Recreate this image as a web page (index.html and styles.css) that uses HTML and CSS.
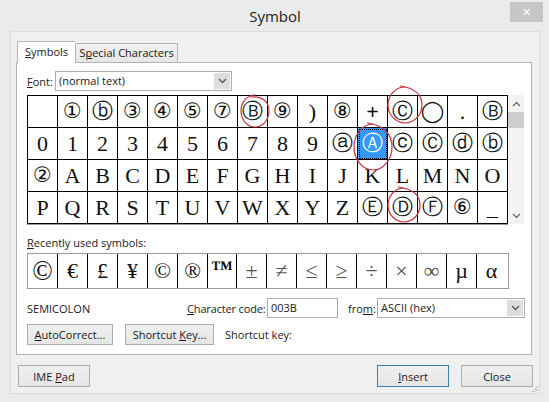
FILE: index.html
```html
<!DOCTYPE html>
<html lang="en">

<head>
    <meta charset="UTF-8">
    <title>Symbol</title>
    <link rel="stylesheet" href="styles.css">
</head>

<body>
    <div class="window">
        <div class="titlebar">
            <div class="title">Symbol</div>
            <div class="close">&#x2715;</div>
        </div>

        <div class="client">
            <div class="tabs">
                <div class="tab active"><u>S</u>ymbols</div>
                <div class="tab">S<u>p</u>ecial Characters</div>
            </div>

            <div class="panel">
                <div class="font-row">
                    <span class="font-label"><u>F</u>ont:</span>
                    <div class="select font-select">
                        <span class="value">(normal text)</span>
                        <span class="arrow"><svg width="9" height="6" viewBox="0 0 9 6"><polyline points="1,1 4.5,4.5 8,1" fill="none" stroke="#555" stroke-width="1.3"/></svg></span>
                    </div>
                </div>

                <div class="map-wrap">
                    <div class="charmap">
                        <div class="cell"></div>
                        <div class="cell c">&#x2460;</div>
                        <div class="cell c">&#x24D1;</div>
                        <div class="cell c">&#x2462;</div>
                        <div class="cell c">&#x2463;</div>
                        <div class="cell c">&#x2464;</div>
                        <div class="cell c">&#x2466;</div>
                        <div class="cell c">&#x24B7;</div>
                        <div class="cell c">&#x2468;</div>
                        <div class="cell">)</div>
                        <div class="cell c">&#x2467;</div>
                        <div class="cell plus">+</div>
                        <div class="cell c">&#x24B8;</div>
                        <div class="cell c">&#x25EF;</div>
                        <div class="cell">.</div>
                        <div class="cell c">&#x24B7;</div>

                        <div class="cell">0</div>
                        <div class="cell">1</div>
                        <div class="cell">2</div>
                        <div class="cell">3</div>
                        <div class="cell">4</div>
                        <div class="cell">5</div>
                        <div class="cell">6</div>
                        <div class="cell">7</div>
                        <div class="cell">8</div>
                        <div class="cell">9</div>
                        <div class="cell c">&#x24D0;</div>
                        <div class="cell c selected">&#x24B6;</div>
                        <div class="cell c">&#x24D2;</div>
                        <div class="cell c">&#x24B8;</div>
                        <div class="cell c">&#x24D3;</div>
                        <div class="cell c">&#x24D1;</div>

                        <div class="cell c">&#x2461;</div>
                        <div class="cell">A</div>
                        <div class="cell">B</div>
                        <div class="cell">C</div>
                        <div class="cell">D</div>
                        <div class="cell">E</div>
                        <div class="cell">F</div>
                        <div class="cell">G</div>
                        <div class="cell">H</div>
                        <div class="cell">I</div>
                        <div class="cell">J</div>
                        <div class="cell">K</div>
                        <div class="cell">L</div>
                        <div class="cell">M</div>
                        <div class="cell">N</div>
                        <div class="cell">O</div>

                        <div class="cell">P</div>
                        <div class="cell">Q</div>
                        <div class="cell">R</div>
                        <div class="cell">S</div>
                        <div class="cell">T</div>
                        <div class="cell">U</div>
                        <div class="cell">V</div>
                        <div class="cell">W</div>
                        <div class="cell">X</div>
                        <div class="cell">Y</div>
                        <div class="cell">Z</div>
                        <div class="cell c">&#x24BA;</div>
                        <div class="cell c">&#x24B9;</div>
                        <div class="cell c">&#x24BB;</div>
                        <div class="cell c">&#x2465;</div>
                        <div class="cell">_</div>

                        <!-- hand drawn marks on top of the grid -->
                        <svg class="marks" width="481" height="129" viewBox="0 0 481 129">
                            <path d="M227,-1 C219.3,-1 213,6.2 213,15 C213,23.8 219.3,31 227,31 C234.7,31 241,23.8 241,15 C241,6.2 235,0 222,1"/>
                            <path d="M377,-9 C367.6,-9 360,-0.9 360,9 C360,18.9 367.6,27 377,27 C386.4,27 394,18.9 394,9 C394,-0.9 387,-8 372,-10"/>
                            <path d="M345,28 C334.5,28 326,38.4 326,51 C326,63.6 334.5,74 345,74 C355.5,74 364,63.6 364,51 C364,38.4 356,29 339,27"/>
                            <path d="M376,92 C367.2,92 360,99.6 360,109 C360,118.4 367.2,126 376,126 C384.8,126 392,118.4 392,109 C392,99.6 385,93 370,91"/>
                        </svg>
                    </div>
                    <div class="vscroll">
                        <span class="sarrow"><svg width="9" height="6" viewBox="0 0 9 6"><polyline points="1,5 4.5,1.5 8,5" fill="none" stroke="#606060" stroke-width="1.2"/></svg></span>
                        <span class="thumb"></span>
                        <span class="track"></span>
                        <span class="sarrow"><svg width="9" height="6" viewBox="0 0 9 6"><polyline points="1,1 4.5,4.5 8,1" fill="none" stroke="#606060" stroke-width="1.2"/></svg></span>
                    </div>
                </div>

                <div class="recent-label"><u>R</u>ecently used symbols:</div>
                <div class="recent">
                    <div class="rcell big">&copy;</div>
                    <div class="rcell">&euro;</div>
                    <div class="rcell">&pound;</div>
                    <div class="rcell">&yen;</div>
                    <div class="rcell">&copy;</div>
                    <div class="rcell">&reg;</div>
                    <div class="rcell tm">&trade;</div>
                    <div class="rcell thin">&plusmn;</div>
                    <div class="rcell thin">&ne;</div>
                    <div class="rcell thin">&le;</div>
                    <div class="rcell thin">&ge;</div>
                    <div class="rcell thin">&divide;</div>
                    <div class="rcell thin">&times;</div>
                    <div class="rcell thin">&infin;</div>
                    <div class="rcell">&micro;</div>
                    <div class="rcell">&alpha;</div>
                </div>

                <div class="info-row">
                    <span class="char-name">SEMICOLON</span>
                    <span class="code-label"><u>C</u>haracter code:</span>
                    <div class="textbox">003B</div>
                    <span class="from-label">fro<u>m</u>:</span>
                    <div class="select from-select">
                        <span class="value">ASCII (hex)</span>
                        <span class="arrow"><svg width="9" height="6" viewBox="0 0 9 6"><polyline points="1,1 4.5,4.5 8,1" fill="none" stroke="#555" stroke-width="1.3"/></svg></span>
                    </div>
                </div>

                <div class="button-row">
                    <button class="btn autocorrect"><u>A</u>utoCorrect...</button>
                    <button class="btn shortcut">Shortcut <u>K</u>ey...</button>
                    <span class="shortcut-label">Shortcut key:</span>
                </div>
            </div>

            <div class="footer">
                <button class="btn dlg">IME <u>P</u>ad</button>
                <span class="spacer"></span>
                <button class="btn dlg default"><u>I</u>nsert</button>
                <button class="btn dlg">Close</button>
            </div>

            <svg class="grip" width="7" height="7" viewBox="0 0 7 7">
                <line x1="1" y1="7" x2="7" y2="1" stroke="#b0b0b0"/>
                <line x1="4" y1="7" x2="7" y2="4" stroke="#b0b0b0"/>
            </svg>
        </div>
    </div>
</body>

</html>
```

FILE: styles.css
```css
body {
    margin: 0;
    font-family: "Open Sans", "Noto Sans", sans-serif;
    font-size: 11px;
    color: #1a1a1a;
    background: #ebebeb;
}

u {
    text-decoration: underline;
    text-underline-offset: 1px;
}

.window {
    width: 549px;
    height: 402px;
    box-sizing: border-box;
    padding: 0 9px 8px 10px;
    display: flex;
    flex-direction: column;
}

.titlebar {
    height: 31px;
    flex-shrink: 0;
    display: grid;
    grid-template-columns: 1fr auto 1fr;
    align-items: start;
}

.title {
    grid-column: 2;
    font-size: 15px;
    line-height: 20px;
    padding-top: 6px;
    color: #222;
}

.close {
    grid-column: 3;
    justify-self: end;
    width: 33px;
    height: 20px;
    margin: 2px -3px 0 0;
    background: #c6c6c6;
    color: #fff;
    font-size: 11px;
    line-height: 20px;
    text-align: center;
}

.client {
    position: relative;
    flex: 1;
    background: #f0f0f0;
    border: 1px solid #dcdcdc;
    padding: 9px 7px 0 5px;
}

.tabs {
    display: flex;
    align-items: flex-end;
    height: 21px;
    margin-left: 1px;
}

.tab {
    box-sizing: border-box;
    height: 19px;
    width: 103px;
    border: 1px solid #b4b4b4;
    border-bottom: none;
    background: linear-gradient(#f2f2f2, #e6e6e6);
    text-align: center;
    line-height: 17px;
    white-space: nowrap;
}

.tab.active {
    width: 58px;
    height: 22px;
    margin-bottom: -1px;
    background: #fff;
    border-right: none;
    position: relative;
    z-index: 1;
    line-height: 20px;
}

.panel {
    box-sizing: border-box;
    height: 293px;
    background: #fff;
    border: 1px solid #b4b4b4;
    padding: 8px 0 0 10px;
}

.font-row {
    display: flex;
    align-items: center;
    height: 20px;
}

.font-label {
    width: 28px;
}

.select {
    box-sizing: border-box;
    display: flex;
    height: 20px;
    border: 1px solid #acacac;
    background: #fff;
    flex-shrink: 0;
}

.select .value {
    flex: 1;
    padding-left: 3px;
    line-height: 17px;
}

.select .arrow {
    width: 16px;
    margin: 1px;
    background: #dedede;
    display: flex;
    align-items: center;
    justify-content: center;
}

.font-select {
    width: 177px;
}

.map-wrap {
    display: flex;
    align-items: flex-start;
    margin-top: 4px;
}

.charmap {
    position: relative;
    display: grid;
    grid-template-columns: repeat(16, 30px);
    grid-auto-rows: 32px;
    border-left: 1px solid #000;
    border-top: 1px solid #000;
    box-shadow: 0 1px 0 #9a9a9a;
    font-family: "Liberation Serif", "DejaVu Serif", serif;
    font-size: 22px;
    color: #111;
}

.cell {
    border-right: 1px solid #000;
    border-bottom: 1px solid #000;
    display: flex;
    align-items: center;
    justify-content: center;
    line-height: 1;
}

.cell.c {
    font-family: "DejaVu Serif", "DejaVu Sans", serif;
    font-size: 21px;
}

.cell.plus {
    font-weight: bold;
}

.cell.selected {
    background: #3399ff;
    color: #fff;
    outline: 1px dotted #000;
    outline-offset: -2px;
}

.marks {
    position: absolute;
    left: 0;
    top: 0;
    overflow: visible;
    pointer-events: none;
}

.marks path {
    fill: none;
    stroke: #c8343e;
    stroke-width: 1.2;
}

.vscroll {
    width: 16px;
    height: 129px;
    background: #f3f3f3;
    display: flex;
    flex-direction: column;
}

.sarrow {
    height: 17px;
    display: flex;
    align-items: center;
    justify-content: center;
}

.thumb {
    height: 16px;
    background: #cdcdcd;
}

.track {
    flex: 1;
}

.recent-label {
    margin-top: 11px;
    line-height: 16px;
}

.recent {
    display: flex;
    width: 482px;
    box-sizing: border-box;
    height: 36px;
    margin-top: 2px;
    border: 1px solid #9a9a9a;
    font-family: "Liberation Serif", "DejaVu Serif", serif;
    font-size: 22px;
    color: #111;
}

.rcell {
    width: 29px;
    border-right: 1px solid #000;
    display: flex;
    align-items: center;
    justify-content: center;
    line-height: 1;
    flex-shrink: 0;
}

.rcell:last-child {
    border-right: none;
}

.rcell.big {
    font-size: 27px;
}

.rcell.tm {
    font-weight: bold;
    align-items: flex-start;
    padding-top: 4px;
    box-sizing: border-box;
}

.rcell.thin {
    color: #555;
}

.info-row {
    display: flex;
    align-items: center;
    height: 20px;
    margin-top: 9px;
    white-space: nowrap;
}

.info-row > * {
    flex-shrink: 0;
}

.char-name {
    width: 160px;
}

.code-label {
    width: 80px;
    letter-spacing: -0.15px;
}

.textbox {
    box-sizing: border-box;
    width: 71px;
    height: 20px;
    border: 1px solid #acacac;
    padding-left: 3px;
    line-height: 17px;
}

.from-label {
    width: 29px;
    margin-left: 10px;
}

.from-select {
    width: 148px;
}

.button-row {
    display: flex;
    align-items: center;
    gap: 12px;
    margin-top: 6px;
    white-space: nowrap;
}

.btn {
    box-sizing: border-box;
    height: 21px;
    padding: 0;
    border: 1px solid #acacac;
    background: linear-gradient(#f0f0f0, #e5e5e5);
    font-family: inherit;
    font-size: 11px;
    color: #1a1a1a;
    flex-shrink: 0;
}

.autocorrect {
    width: 86px;
}

.shortcut {
    width: 89px;
}

.shortcut-label {
    margin-left: -1px;
}

.footer {
    display: flex;
    gap: 12px;
    margin: 10px -1px 0 2px;
}

.btn.dlg {
    width: 72px;
    height: 22px;
}

.btn.default {
    border-color: #3c7fb1;
}

.spacer {
    flex: 1;
}

.grip {
    position: absolute;
    right: 1px;
    bottom: 1px;
}
```
